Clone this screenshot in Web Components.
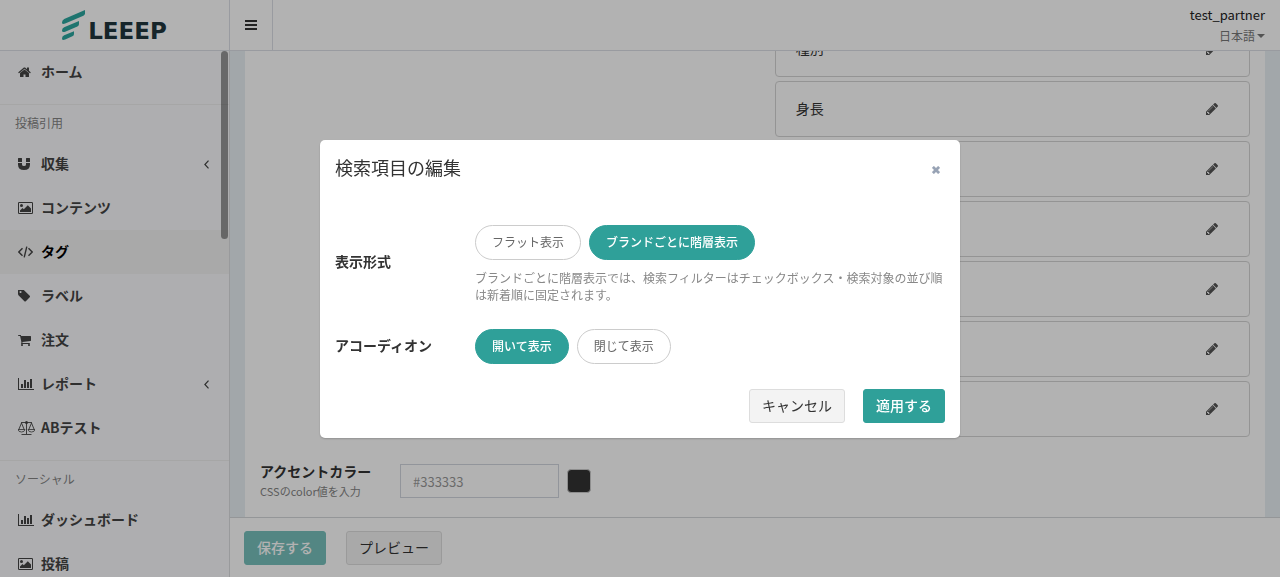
<!DOCTYPE html>
<html lang="ja">
<head>
<meta charset="UTF-8">
<meta name="viewport" content="width=device-width, initial-scale=1">
<title>LEEEP</title>
<style>
    body {
        margin: 0;
        color: #333;
        font-family: "Noto Sans CJK JP", sans-serif;
        font-size: 14px;
        line-height: 20px;
    }
</style>
</head>
<body>
<leeep-app></leeep-app>

<script>
// Iconos (viewBox + contenido)
const ICONS = {
    bars: ['0 0 12 10', '<path d="M0 0h12v2H0zM0 4h12v2H0zM0 8h12v2H0z"/>'],
    home: ['60 200 1672 1350', '<path d="M1472 992v480q0 26-19 45t-45 19h-384v-384h-256v384h-384q-26 0-45-19t-19-45v-480q0-1 .5-3t.5-3l575-474 575 474q1 2 1 6zm223-69l-62 74q-8 9-21 11h-3q-13 0-21-7l-692-577-692 577q-12 8-24 7-13-2-21-11l-62-74q-8-10-7-23.5t11-21.5l719-599q32-26 76-26t76 26l244 204v-195q0-14 9-23t23-9h192q14 0 23 9t9 23v408l219 182q10 8 11 21.5t-7 23.5z"/>'],
    magnet: ['0 0 12 12', '<path d="M0 5h4v1.500q0 1.500 2 1.500t2-1.500V5h4v1.500Q12 12 6 12T0 6.500zM.5 0h3q.5 0 .5.5V4H0V.5Q0 0 .5 0zM8.500 0h3q.5 0 .5.5V4H8V.5q0-.5.5-.5z"/>'],
    image: ['0 0 15 12', '<path fill-rule="evenodd" d="M1.200 0h12.600Q15 0 15 1.200v9.600Q15 12 13.800 12H1.200Q0 12 0 10.800V1.200Q0 0 1.200 0zM1 1.200v9.600q0 .2.2.2h12.600q.2 0 .2-.2V1.200q0-.2-.2-.2H1.200Q1 1 1 1.200z"/><circle cx="3.500" cy="3.500" r="1.500"/><path d="M2 10V8.500L4.500 6l1.300 1.300L9.800 3.200 13 6.400V10z"/>'],
    code: ['0 0 15 12', '<path fill="none" stroke="currentColor" stroke-width="1.400" d="M4.500 2.200L.8 6l3.700 3.800M10.500 2.200L14.200 6l-3.700 3.800M8.800.6L6.200 11.400"/>'],
    tag: ['128 192 1515 1515', '<path d="M576 448q0-53-37.500-90.500t-90.500-37.500-90.500 37.500-37.500 90.500 37.500 90.500 90.500 37.500 90.500-37.500 37.500-90.500zm1067 576q0 53-37 90l-491 492q-39 37-91 37-53 0-90-37l-715-716q-38-37-64.500-101t-26.500-117v-416q0-52 38-90t90-38h416q53 0 117 26.500t102 64.500l715 714q37 39 37 91z" fill-rule="evenodd"/>'],
    cart: ['64 256 1664 1408', '<path d="M704 1536q0 52-38 90t-90 38-90-38-38-90 38-90 90-38 90 38 38 90zm896 0q0 52-38 90t-90 38-90-38-38-90 38-90 90-38 90 38 38 90zm128-1088v512q0 24-16.500 42.500t-40.500 21.500l-1044 122q13 60 13 70 0 16-24 64h920q26 0 45 19t19 45-19 45-45 19h-1024q-26 0-45-19t-19-45q0-11 8-31.500t16-36 21.500-40 15.500-29.500l-177-823h-204q-26 0-45-19t-19-45 19-45 45-19h256q16 0 28.500 6.500t19.500 15.500 13 24.500 8 26 5.500 29.500 4.500 26h1201q26 0 45 19t19 45z"/>'],
    chart: ['0 0 16 12', '<path d="M0 0h1v11h15v1H0zM3 6h2v4H3zM6 2h2v8H6zM9 4h2v6H9zM12 1h2v9h-2z"/>'],
    scale: ['0 0 17 14', '<path fill="none" stroke="currentColor" d="M3 1.500h11M8.500 1v12M3.500 13.500h10M3.500 2L.8 8.500M3.500 2l2.700 6.500M13.500 2l-2.700 6.500M13.500 2l2.700 6.500" stroke-width=".9"/><path d="M0 8.500h7Q6.500 11 3.500 11T0 8.500zM10 8.500h7q-.5 2.500-3.500 2.500T10 8.500z" fill="none" stroke="currentColor" stroke-width=".8"/><circle cx="8.500" cy="1.500" r="1.500"/>'],
    angle: ['0 0 5 9', '<path fill="none" stroke="currentColor" stroke-width="1.200" d="M4.500.7L.9 4.500l3.600 3.800"/>'],
    caret: ['0 0 8 4', '<path d="M0 0h8L4 4z"/>'],
    times: ['0 0 8 8', '<path fill="none" stroke="currentColor" stroke-width="2.800" d="M.9.9l6.200 6.200M7.100.9L.9 7.100"/>'],
    pencil: ['128 149 1515 1515', '<path d="M491 1536l91-91-235-235-91 91v107h128v128h107zm523-928q0-22-22-22-10 0-17 7l-542 542q-7 7-7 17 0 22 22 22 10 0 17-7l542-542q7-7 7-17zm-54-192l416 416-832 832h-416v-416zm683 96q0 53-37 90l-166 166-416-416 166-165q36-38 90-38 53 0 91 38l235 234q37 39 37 91z"/>']
};

// Clase base: cada componente define style y html
class BaseElement extends HTMLElement {
    connectedCallback() {
        if (this.shadowRoot) return;
        this.attachShadow({ mode: 'open' });
        this.shadowRoot.innerHTML = `
        <style>
            * { box-sizing: border-box; }
            ${this.constructor.style}
        </style>
        ${this.html()}
        `;
    }
}

class UiIcon extends BaseElement {
    static get style() {
        return /*css*/`
        :host { display: inline-flex; flex: none; }
        svg { display: block; fill: currentColor; }
        `;
    }

    html() {
        const [box, shape] = ICONS[this.getAttribute('name')];
        const size = this.getAttribute('width');
        return `<svg viewBox="${box}" width="${size}" aria-hidden="true">${shape}</svg>`;
    }
}

class UiButton extends BaseElement {
    static get style() {
        return /*css*/`
        :host { display: inline-block; }
        button {
            display: block;
            height: 34px;
            padding: 0 12px 2px;
            border: 1px solid #ddd;
            border-radius: 3px;
            background: #f3f3f3;
            color: #333;
            font: inherit;
        }
        :host([primary]) button {
            border-color: #2fa099;
            background: #2fa099;
            color: #fff;
            font-weight: 500;
        }
        :host([disabled]) button { opacity: .65; }
        `;
    }

    html() {
        return `<button type="button" ${this.hasAttribute('disabled') ? 'disabled' : ''}><slot></slot></button>`;
    }
}

class AppHeader extends BaseElement {
    static get style() {
        return /*css*/`
        :host {
            display: flex;
            height: 50px;
            background: #fff;
            box-shadow: 0 1px #dcdee6;
            position: relative;
            z-index: 1;
        }
        .logo {
            display: flex;
            align-items: center;
            justify-content: center;
            gap: 2px;
            width: 230px;
            border-right: 1px solid #dcdee6;
            color: #20353d;
            font: 700 23px/30px "DejaVu Sans", sans-serif;
            text-decoration: none;
        }
        .logo span { padding-top: 12px; }
        .menu {
            display: flex;
            align-items: center;
            justify-content: center;
            width: 43px;
            padding: 0;
            border: 0;
            border-right: 1px solid #dcdee6;
            background: none;
            color: #333;
        }
        .user {
            display: flex;
            flex-direction: column;
            align-items: flex-end;
            margin-left: auto;
            padding: 5px 15px 0 0;
            color: #222;
            font-size: 13px;
        }
        .lang {
            display: flex;
            align-items: center;
            gap: 1px;
            color: #777;
        }
        select {
            appearance: none;
            padding: 0;
            border: 0;
            background: none;
            color: inherit;
            font: 12px/22px "Noto Sans CJK JP", sans-serif;
        }
        `;
    }

    html() {
        return /*html*/`
        <a class="logo" href="#">
            <svg width="24" height="31" viewBox="0 0 24 31" fill="#2ca79f" aria-hidden="true">
                <path d="M0 12.500Q0 10 2.200 9L23 0v3.500q0 1.500-1.600 2.200L3.200 13.600Q0 14.800 0 12.500z"/>
                <path d="M0 20.500Q0 18.200 2.200 17.200L17 11v3q0 1.700-1.600 2.400L3.200 21.700Q0 22.800 0 20.500z"/>
                <path d="M0 28.500Q0 26.300 2.200 25.300L12 21.300v2.600q0 1.700-1.600 2.400L3.200 29.600Q0 30.800 0 28.500z"/>
            </svg>
            <span>LEEEP</span>
        </a>
        <button class="menu" type="button" aria-label="メニュー"><ui-icon name="bars" width="12"></ui-icon></button>
        <div class="user">
            <span>test_partner</span>
            <div class="lang">
                <select aria-label="言語"><option>日本語</option></select>
                <ui-icon name="caret" width="8"></ui-icon>
            </div>
        </div>
        `;
    }
}

class NavItem extends BaseElement {
    static get style() {
        return /*css*/`
        :host { display: block; }
        a {
            display: flex;
            align-items: center;
            height: 44px;
            padding: 0 20px 0 18px;
            color: #444;
            font-weight: 700;
            text-decoration: none;
        }
        :host([active]) a { background: #f3f3f3; color: #000; }
        .icon { display: flex; width: 23px; color: #444; }
        .text { padding-bottom: 2px; }
        .arrow { margin-left: auto; }
        `;
    }

    html() {
        const arrow = this.hasAttribute('more') ? '<ui-icon class="arrow" name="angle" width="5"></ui-icon>' : '';
        return /*html*/`
        <a href="#">
            <span class="icon"><ui-icon name="${this.getAttribute('icon')}" width="${this.getAttribute('size')}"></ui-icon></span>
            <span class="text"><slot></slot></span>
            ${arrow}
        </a>
        `;
    }
}

class AppSidebar extends BaseElement {
    static get style() {
        return /*css*/`
        :host {
            display: block;
            position: relative;
            width: 230px;
            overflow: hidden;
            border-right: 1px solid #dbdde0;
            background: #f9fafc;
        }
        section { padding-bottom: 10px; }
        section + section { border-top: 1px solid #eee; }
        h2 {
            margin: 0;
            padding: 8px 15px 9px;
            color: #848484;
            font-size: 12px;
            font-weight: 400;
        }
        /* Barra de scroll sobre el menú */
        .thumb {
            position: absolute;
            top: 1px;
            right: 1px;
            width: 7px;
            height: 188px;
            border-radius: 4px;
            background: rgba(0, 0, 0, .4);
        }
        `;
    }

    html() {
        return /*html*/`
        <nav>
            <section>
                <nav-item icon="home" size="13">ホーム</nav-item>
            </section>
            <section>
                <h2>投稿引用</h2>
                <nav-item icon="magnet" size="12" more>収集</nav-item>
                <nav-item icon="image" size="15">コンテンツ</nav-item>
                <nav-item icon="code" size="15" active>タグ</nav-item>
                <nav-item icon="tag" size="12">ラベル</nav-item>
                <nav-item icon="cart" size="13">注文</nav-item>
                <nav-item icon="chart" size="16" more>レポート</nav-item>
                <nav-item icon="scale" size="17">ABテスト</nav-item>
            </section>
            <section>
                <h2>ソーシャル</h2>
                <nav-item icon="chart" size="16">ダッシュボード</nav-item>
                <nav-item icon="image" size="15">投稿</nav-item>
            </section>
        </nav>
        <div class="thumb"></div>
        `;
    }
}

class FilterCard extends BaseElement {
    static get style() {
        return /*css*/`
        :host {
            display: flex;
            align-items: center;
            justify-content: space-between;
            height: 56px;
            padding: 0 31px 0 20px;
            border: 1px solid #d5d5d5;
            border-radius: 4px;
            background: #fff;
        }
        span { padding-bottom: 2px; }
        button {
            display: flex;
            padding: 0;
            border: 0;
            background: none;
            color: #555;
        }
        `;
    }

    html() {
        return /*html*/`
        <span><slot></slot></span>
        <button type="button" aria-label="編集"><ui-icon name="pencil" width="12"></ui-icon></button>
        `;
    }
}

class AppContent extends BaseElement {
    static get style() {
        return /*css*/`
        :host {
            display: flex;
            flex-direction: column;
            min-width: 0;
            min-height: 0;
            background: #e8eff4;
        }
        .scroll {
            display: flex;
            flex: 1;
            flex-direction: column;
            justify-content: flex-end;
            min-height: 0;
            overflow: hidden;
            padding: 0 15px;
        }
        .panel {
            flex: none;
            padding: 15px 15px 16px;
            background: #fff;
        }
        .cards {
            display: flex;
            flex-direction: column;
            gap: 4px;
            width: 48%;
            margin: 0 0 24px auto;
        }
        .field { display: flex; align-items: center; }
        .label { width: 140px; }
        label { display: block; font-weight: 700; }
        small { display: block; color: #848484; font-size: 11px; }
        input {
            width: 159px;
            height: 34px;
            padding: 0 12px;
            border: 1px solid #d2d6de;
            background: #fff;
            font: inherit;
            font-size: 13px;
        }
        input::placeholder { color: #999; opacity: 1; }
        .swatch {
            width: 24px;
            height: 24px;
            margin-left: 8px;
            border: 1px solid #ccc;
            border-radius: 4px;
            background: #333;
        }
        footer {
            display: flex;
            gap: 20px;
            padding: 13px 14px 12px;
            border-top: 1px solid #d5d7da;
            background: #fff;
        }
        `;
    }

    html() {
        return /*html*/`
        <div class="scroll">
            <div class="panel">
                <div class="cards">
                    <filter-card>種別</filter-card>
                    <filter-card>身長</filter-card>
                    <filter-card></filter-card>
                    <filter-card></filter-card>
                    <filter-card></filter-card>
                    <filter-card></filter-card>
                    <filter-card></filter-card>
                </div>
                <div class="field">
                    <div class="label">
                        <label for="accent">アクセントカラー</label>
                        <small>CSSのcolor値を入力</small>
                    </div>
                    <input id="accent" type="text" placeholder="#333333">
                    <span class="swatch"></span>
                </div>
            </div>
        </div>
        <footer>
            <ui-button primary disabled>保存する</ui-button>
            <ui-button>プレビュー</ui-button>
        </footer>
        `;
    }
}

class PillGroup extends BaseElement {
    static get style() {
        return /*css*/`
        :host { display: block; }
        fieldset {
            display: flex;
            gap: 8px;
            margin: 0;
            padding: 0;
            border: 0;
        }
        input { appearance: none; width: 0; height: 0; margin: 0; outline: 0; }
        label {
            display: flex;
            align-items: center;
            height: 35px;
            padding: 0 16px;
            border: 1px solid #ccc;
            border-radius: 18px;
            background: #fff;
            color: #666;
            font-size: 12px;
        }
        label:has(input:checked) {
            border-color: #2fa099;
            background: #2fa099;
            color: #fff;
            font-weight: 500;
        }
        `;
    }

    html() {
        const selected = Number(this.getAttribute('selected'));
        const pills = this.getAttribute('options').split(',').map((text, i) => `
            <label><input type="radio" name="pill" ${i === selected ? 'checked' : ''}>${text}</label>`);
        return `<fieldset aria-label="${this.getAttribute('label')}">${pills.join('')}</fieldset>`;
    }
}

class EditModal extends BaseElement {
    static get style() {
        return /*css*/`
        :host {
            display: flex;
            align-items: center;
            justify-content: center;
            position: fixed;
            inset: 0;
            z-index: 10;
            background: rgba(0, 0, 0, .3);
        }
        .modal {
            width: 50%;
            min-width: 600px;
            padding: 15px;
            border-radius: 5px;
            background: #fff;
            box-shadow: 0 1px 2px rgba(0, 0, 0, .2);
        }
        header {
            display: flex;
            align-items: center;
            justify-content: space-between;
            margin-bottom: 38px;
        }
        h1 {
            margin: 0;
            padding-bottom: 2px;
            font-size: 18px;
            font-weight: 400;
            line-height: 25px;
        }
        .close {
            display: flex;
            padding: 4px 5px 0;
            border: 0;
            background: none;
            color: #98a3b5;
        }
        .row { display: flex; align-items: center; margin-bottom: 25px; }
        .name { width: 140px; padding-bottom: 2px; font-weight: 700; }
        .value { flex: 1; }
        .top { padding-top: 5px; }
        p { margin: 9px 0 1px; color: #888; font-size: 12px; line-height: 17px; }
        footer { display: flex; justify-content: flex-end; gap: 18px; }
        `;
    }

    html() {
        return /*html*/`
        <div class="modal" role="dialog" aria-labelledby="title">
            <header>
                <h1 id="title">検索項目の編集</h1>
                <button class="close" type="button" aria-label="閉じる"><ui-icon name="times" width="8"></ui-icon></button>
            </header>
            <div class="row">
                <div class="name">表示形式</div>
                <div class="value top">
                    <pill-group label="表示形式" options="フラット表示,ブランドごとに階層表示" selected="1"></pill-group>
                    <p>ブランドごとに階層表示では、検索フィルターはチェックボックス・検索対象の並び順は新着順に固定されます。</p>
                </div>
            </div>
            <div class="row">
                <div class="name">アコーディオン</div>
                <div class="value">
                    <pill-group label="アコーディオン" options="開いて表示,閉じて表示" selected="0"></pill-group>
                </div>
            </div>
            <footer>
                <ui-button>キャンセル</ui-button>
                <ui-button primary>適用する</ui-button>
            </footer>
        </div>
        `;
    }
}

class LeeepApp extends BaseElement {
    static get style() {
        return /*css*/`
        :host {
            display: flex;
            flex-direction: column;
            height: 100vh;
            overflow: hidden;
        }
        .body { display: flex; flex: 1; min-height: 0; }
        app-sidebar { flex: none; }
        app-content { flex: 1; }
        `;
    }

    html() {
        return /*html*/`
        <app-header></app-header>
        <div class="body">
            <app-sidebar></app-sidebar>
            <app-content></app-content>
        </div>
        <edit-modal></edit-modal>
        `;
    }
}

window.customElements.define('ui-icon', UiIcon);
window.customElements.define('ui-button', UiButton);
window.customElements.define('app-header', AppHeader);
window.customElements.define('nav-item', NavItem);
window.customElements.define('app-sidebar', AppSidebar);
window.customElements.define('filter-card', FilterCard);
window.customElements.define('app-content', AppContent);
window.customElements.define('pill-group', PillGroup);
window.customElements.define('edit-modal', EditModal);
window.customElements.define('leeep-app', LeeepApp);
</script>
</body>
</html>
